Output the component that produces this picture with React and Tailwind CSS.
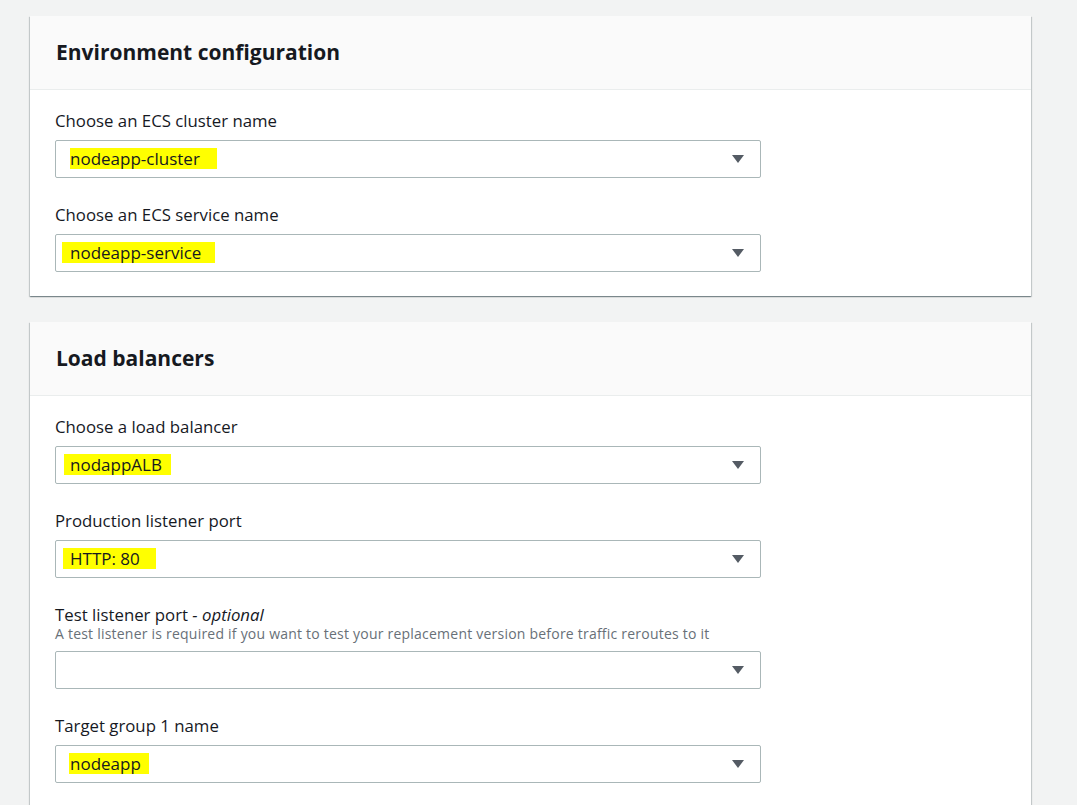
import React from "react";

function Caret() {
  return (
    <svg width="14" height="10" viewBox="0 0 14 10" className="shrink-0">
      <path d="M1 1 L13 1 L7 9 Z" fill="#545b64" />
    </svg>
  );
}

function Select({ value, hl }) {
  return (
    <div className="w-[706px] h-[38px] border border-[#aab7b8] rounded-[2px] bg-white flex items-center justify-between pl-[14px] pr-[15px]">
      <div className="flex items-center">
        {value ? (
          <span className={"bg-[#ffff00] text-[17px] leading-[21px] text-[#16191f] mt-[-1px] " + hl}>{value}</span>
        ) : null}
      </div>
      <Caret />
    </div>
  );
}

function Field({ label, optional, desc, value, hl, last }) {
  return (
    <div className={last ? "" : "mb-[26px]"}>
      <div className="text-[16.8px] leading-[22px] text-[#16191f]">
        {label}
        {optional ? <i> - optional</i> : null}
      </div>
      {desc ? (
        <div className="text-[14px] leading-[18px] text-[#687078] tracking-[0.22px] mb-[3px] mt-[-1px]">{desc}</div>
      ) : null}
      <div className="mt-[8px]">
        <Select value={value} hl={hl} />
      </div>
    </div>
  );
}

function Card({ title, children, className }) {
  return (
    <div className={"w-[1001px] bg-white shadow-[0_1px_1px_0_rgba(0,28,36,0.3),1px_1px_1px_0_rgba(0,28,36,0.15),-1px_1px_1px_0_rgba(0,28,36,0.15)] " + (className || "")}>
      <div className="h-[74px] bg-[#fafafa] border-b border-[#eaeded] pl-[26px] flex items-center">
        <h2 className="text-[21px] font-bold text-[#16191f] leading-[26px] mt-[-1px]">{title}</h2>
      </div>
      <div className="pl-[25px] pt-[20px] pb-[24px]">{children}</div>
    </div>
  );
}

export default function App() {
  return (
    <div className="min-h-[805px] w-[1077px] bg-[#f2f3f3] pt-[16px] pl-[30px] overflow-hidden" style={{ fontFamily: '"Open Sans", "Noto Sans", Arial, sans-serif' }}>
      <Card title="Environment configuration">
        <Field label="Choose an ECS cluster name" value="nodeapp-cluster" hl="pr-[17px]" />
        <Field label="Choose an ECS service name" value="nodeapp-service" hl="ml-[-8px] pl-[8px] pr-[14px]" last />
      </Card>
      <Card title="Load balancers" className="mt-[26px]">
        <Field label="Choose a load balancer" value="nodappALB" hl="ml-[-6px] pl-[6px] pr-[9px]" />
        <Field label="Production listener port" value="HTTP: 80" hl="ml-[-7px] pl-[7px] pr-[16px]" />
        <Field
          label="Test listener port"
          optional
          desc="A test listener is required if you want to test your replacement version before traffic reroutes to it"
        />
        <Field label="Target group 1 name" value="nodeapp" hl="ml-[-1px] pl-[1px] pr-[8px]" />
      </Card>
    </div>
  );
}
